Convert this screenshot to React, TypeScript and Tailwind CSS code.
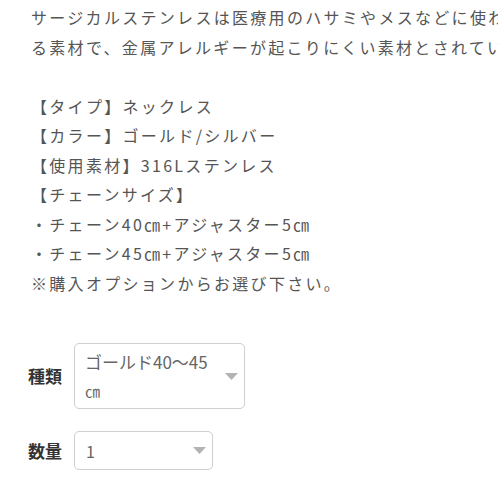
const font = {
  fontFamily: '"Noto Sans CJK JP", "Noto Sans", sans-serif',
};

function Caret() {
  return (
    <svg width="13" height="7" viewBox="0 0 13 7" className="shrink-0">
      <path d="M0 0 H13 L6.5 7 Z" fill="#b3b3b3" />
    </svg>
  );
}

export default function App() {
  const lines = [
    "サージカルステンレスは医療用のハサミやメスなどに使わ",
    "る素材で、金属アレルギーが起こりにくい素材とされてい",
    "",
    "【タイプ】ネックレス",
    "【カラー】ゴールド/シルバー",
    "【使用素材】316Lステンレス",
    "【チェーンサイズ】",
    "・チェーン40㎝+アジャスター5㎝",
    "・チェーン45㎝+アジャスター5㎝",
    "※購入オプションからお選び下さい。",
  ];

  return (
    <div className="w-[498px] h-[498px] overflow-hidden bg-white" style={font}>
      <div className="pl-[31px] pt-[3px] text-[16px] leading-[29.5px] tracking-[2.3px] text-[#555] whitespace-nowrap overflow-hidden">
        {lines.map((l, i) => (
          <div key={i} className="h-[29.5px]">
            {l}
          </div>
        ))}
      </div>

      <div className="mt-[45px] pl-[28px] flex flex-col gap-[22px]">
        <div className="flex items-center gap-[9px]">
          <span className="w-[37px] text-[17px] font-bold text-[#333]">種類</span>
          <div className="w-[171px] h-[66px] border border-[#cfcfcf] rounded-[5px] flex items-center justify-between pl-[10px] pr-[6px]">
            <div className="text-[17px] leading-[28px] text-[#666] w-[135px]">
              ゴールド40〜45
              <br />
              <span className="text-[15px]">㎝</span>
            </div>
            <Caret />
          </div>
        </div>
        <div className="flex items-center gap-[9px]">
          <span className="w-[37px] text-[17px] font-bold text-[#333]">数量</span>
          <div className="w-[139px] h-[39px] border border-[#cfcfcf] rounded-[5px] flex items-center justify-between pl-[11px] pr-[6px]">
            <span className="text-[16px] text-[#666]">1</span>
            <Caret />
          </div>
        </div>
      </div>
    </div>
  );
}
